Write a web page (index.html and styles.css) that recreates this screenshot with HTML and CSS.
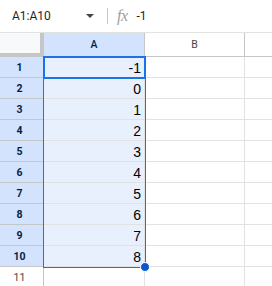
FILE: index.html
```html
<!DOCTYPE html>
<html lang="en">
<head>
    <meta charset="UTF-8">
    <title>Sheet</title>
    <link rel="stylesheet" href="styles.css">
</head>
<body>
    <!-- formula bar -->
    <div class="bar">
        <div class="namebox">A1:A10</div>
        <div class="caret"></div>
        <div class="sep"></div>
        <div class="fx">fx</div>
        <div class="value">-1</div>
    </div>

    <!-- grid -->
    <div class="sheet">
        <div class="grid">
            <div class="corner"></div>
            <div class="colhead sel">A</div>
            <div class="colhead">B</div>
            <div class="colhead last"></div>

            <div class="rowhead sel">1</div><div class="cell sel">-1</div><div class="cell"></div><div class="cell last"></div>
            <div class="rowhead sel">2</div><div class="cell sel">0</div><div class="cell"></div><div class="cell last"></div>
            <div class="rowhead sel">3</div><div class="cell sel">1</div><div class="cell"></div><div class="cell last"></div>
            <div class="rowhead sel">4</div><div class="cell sel">2</div><div class="cell"></div><div class="cell last"></div>
            <div class="rowhead sel">5</div><div class="cell sel">3</div><div class="cell"></div><div class="cell last"></div>
            <div class="rowhead sel">6</div><div class="cell sel">4</div><div class="cell"></div><div class="cell last"></div>
            <div class="rowhead sel">7</div><div class="cell sel">5</div><div class="cell"></div><div class="cell last"></div>
            <div class="rowhead sel">8</div><div class="cell sel">6</div><div class="cell"></div><div class="cell last"></div>
            <div class="rowhead sel">9</div><div class="cell sel">7</div><div class="cell"></div><div class="cell last"></div>
            <div class="rowhead sel">10</div><div class="cell sel">8</div><div class="cell"></div><div class="cell last"></div>
            <div class="rowhead plain">11</div><div class="cell"></div><div class="cell"></div><div class="cell last"></div>
        </div>
        <div class="range"></div>
        <div class="active"></div>
        <div class="handle"></div>
    </div>
</body>
</html>
```

FILE: styles.css
```css
body {
    margin: 0;
    background: #ffffff;
    font-family: 'Roboto', 'Liberation Sans', sans-serif;
    color: #1f1f1f;
    overflow: hidden;
}

.bar {
    height: 32px;
    display: flex;
    align-items: center;
    border-bottom: 1px solid #e1e3e1;
}

.namebox {
    width: 74px;
    padding-left: 12px;
    font-size: 12px;
    color: #1f1f1f;
}

.caret {
    width: 0;
    height: 0;
    border-left: 4px solid transparent;
    border-right: 4px solid transparent;
    border-top: 4px solid #444746;
}

.sep {
    width: 1px;
    height: 16px;
    background: #c7c7c7;
    margin-left: 13px;
}

.fx {
    margin-left: 9px;
    font-family: 'Liberation Serif', serif;
    font-style: italic;
    font-size: 16px;
    color: #9aa0a6;
    letter-spacing: -0.5px;
}

.value {
    margin-left: 9px;
    font-size: 12px;
    color: #1f1f1f;
}

.sheet {
    position: relative;
}

.grid {
    display: grid;
    grid-template-columns: 44px 101px 100px 27px;
    grid-template-rows: 24px repeat(11, 21px);
}

.corner {
    background: #f8f9fa;
    border-right: 4px solid #c4c7c5;
    border-bottom: 4px solid #c4c7c5;
}

.colhead {
    display: flex;
    align-items: center;
    justify-content: center;
    font-size: 10.5px;
    color: #444746;
    border-right: 1px solid #c4c7c5;
    border-bottom: 1px solid #c4c7c5;
}

.colhead.sel {
    background: #d3e3fd;
    color: #041e49;
    font-weight: 500;
}

.rowhead {
    display: flex;
    align-items: center;
    justify-content: center;
    padding-right: 4px;
    font-size: 10.5px;
    border-right: 1px solid #c4c7c5;
    border-bottom: 1px solid #c4c7c5;
}

.rowhead.plain {
    color: #444746;
}

.rowhead.sel {
    background: #d3e3fd;
    color: #041e49;
    font-weight: 700;
}

.cell {
    display: flex;
    align-items: flex-end;
    justify-content: flex-end;
    padding-right: 3px;
    padding-bottom: 1px;
    font-family: 'Liberation Sans', Arial, sans-serif;
    font-size: 14px;
    color: #000000;
    border-right: 1px solid #e1e3e1;
    border-bottom: 1px solid #e1e3e1;
}

.cell.sel {
    background: #e8f0fe;
}

.colhead.last, .cell.last {
    border-right: none;
}

.range {
    position: absolute;
    left: 43px;
    top: 23px;
    width: 101px;
    height: 210px;
    border: 1px solid #1a73e8;
}

.active {
    position: absolute;
    left: 43px;
    top: 23px;
    width: 99px;
    height: 19px;
    border: 2px solid #1a73e8;
}

.handle {
    position: absolute;
    left: 140px;
    top: 229px;
    width: 8px;
    height: 8px;
    border-radius: 50%;
    background: #0b57d0;
    border: 1px solid #ffffff;
}
```
